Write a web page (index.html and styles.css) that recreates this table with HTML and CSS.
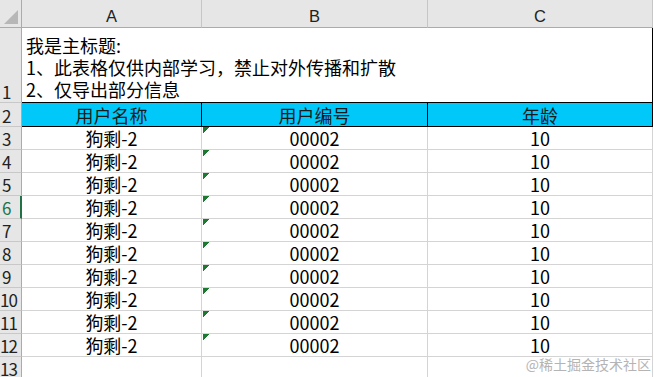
FILE: index.html
```html
<!DOCTYPE html>
<html lang="zh">
<head>
<meta charset="utf-8">
<title>Sheet</title>
<link rel="stylesheet" href="styles.css">
</head>
<body>
<div class="sheet">
  <div class="corner"><span class="corner-tri"></span></div>
  <div class="colhead">A</div>
  <div class="colhead">B</div>
  <div class="colhead">C</div>

  <div class="rowhead">1</div>
  <div class="title">我是主标题:<br>1、此表格仅供内部学习，禁止对外传播和扩散<br>2、仅导出部分信息</div>

  <div class="rowhead">2</div>
  <div class="cell th">用户名称</div>
  <div class="cell th">用户编号</div>
  <div class="cell th">年龄</div>

  <div class="rowhead">3</div><div class="cell">狗剩-2</div><div class="cell txtnum">00002</div><div class="cell">10</div>
  <div class="rowhead">4</div><div class="cell">狗剩-2</div><div class="cell txtnum">00002</div><div class="cell">10</div>
  <div class="rowhead">5</div><div class="cell">狗剩-2</div><div class="cell txtnum">00002</div><div class="cell">10</div>
  <div class="rowhead active">6</div><div class="cell">狗剩-2</div><div class="cell txtnum">00002</div><div class="cell">10</div>
  <div class="rowhead">7</div><div class="cell">狗剩-2</div><div class="cell txtnum">00002</div><div class="cell">10</div>
  <div class="rowhead">8</div><div class="cell">狗剩-2</div><div class="cell txtnum">00002</div><div class="cell">10</div>
  <div class="rowhead">9</div><div class="cell">狗剩-2</div><div class="cell txtnum">00002</div><div class="cell">10</div>
  <div class="rowhead wide">10</div><div class="cell">狗剩-2</div><div class="cell txtnum">00002</div><div class="cell">10</div>
  <div class="rowhead wide">11</div><div class="cell">狗剩-2</div><div class="cell txtnum">00002</div><div class="cell">10</div>
  <div class="rowhead wide">12</div><div class="cell">狗剩-2</div><div class="cell txtnum">00002</div><div class="cell">10</div>
  <div class="rowhead wide">13</div><div class="cell"></div><div class="cell"></div><div class="cell"></div>
</div>
<div class="watermark">@稀土掘金技术社区</div>
</body>
</html>
```
FILE: styles.css
```css
* { box-sizing: border-box; }
html, body {
  margin: 0;
  padding: 0;
  background: #fff;
  overflow: hidden;
}
body {
  font-family: "Noto Sans CJK SC", "Noto Sans", sans-serif;
  color: #000;
  width: 654px;
  height: 377px;
  position: relative;
}
.sheet {
  display: grid;
  grid-template-columns: 22px 180px 226px 225px;
  grid-template-rows: 28px 75px 24px repeat(10, 23px) 23px;
}
.corner {
  background: #e6e6e6;
  border-right: 1px solid #ababab;
  border-bottom: 1px solid #ababab;
  position: relative;
}
.corner-tri {
  position: absolute;
  left: 4px;
  top: 10px;
  width: 0;
  height: 0;
  border-left: 14px solid transparent;
  border-bottom: 14px solid #b7b7b7;
}
.colhead {
  background: #e6e6e6;
  border-right: 1px solid #c6c6c6;
  border-bottom: 1px solid #ababab;
  display: flex;
  justify-content: center;
  align-items: flex-end;
  font-family: "Liberation Sans", sans-serif;
  font-size: 16.5px;
  line-height: 19px;
  padding-bottom: 1px;
  color: #222;
}
.rowhead {
  background: #e6e6e6;
  border-right: 1px solid #ababab;
  border-bottom: 1px solid #c8c8c8;
  display: flex;
  align-items: flex-end;
  font-size: 17px;
  line-height: 20px;
  padding-left: 2px;
  padding-bottom: 0;
  color: #222;
  overflow: hidden;
  white-space: nowrap;
}
.rowhead.wide {
  padding-left: 0;
  letter-spacing: -1px;
}
.rowhead.active {
  color: #217346;
  border-right: 2px solid #217346;
}
.title {
  grid-column: 2 / 5;
  border-right: 1px solid #000;
  border-bottom: 1px solid #000;
  font-size: 18px;
  line-height: 22px;
  padding: 0 0 2px 4px;
  display: flex;
  align-items: flex-end;
}
.cell {
  border-right: 1px solid #d4d4d4;
  border-bottom: 1px solid #d4d4d4;
  display: flex;
  justify-content: center;
  align-items: flex-end;
  font-size: 18px;
  line-height: 22px;
  white-space: nowrap;
}
.cell.th {
  background: #00c8f8;
  border-right: 1px solid #000;
  border-bottom: 1px solid #000;
  color: #1a1a1a;
}
.cell.txtnum {
  background: linear-gradient(135deg, #1b7a30 0 4.5px, transparent 4.5px) no-repeat 1px 0 / 7px 7px;
}
.watermark {
  position: absolute;
  right: 3px;
  bottom: 5px;
  font-size: 14px;
  line-height: 16px;
  color: #b4b4b4;
}
```
